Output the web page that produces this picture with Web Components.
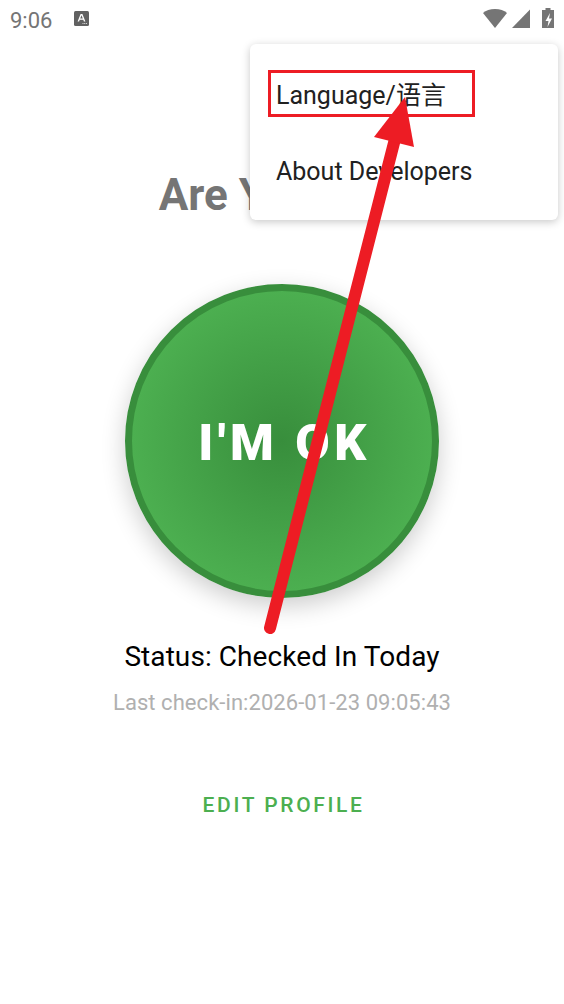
<!DOCTYPE html>
<html>
<head>
<meta charset="utf-8">
<style>
  html, body { margin: 0; padding: 0; background: #fff; }
  body { font-family: Roboto, "Noto Sans CJK SC", sans-serif; width: 564px; height: 1004px; overflow: hidden; position: relative; }
</style>
</head>
<body>
<status-bar time="9:06"></status-bar>
<check-screen>
  <h1 slot="title">Are You OK?</h1>
  <ok-button slot="action">I'M OK</ok-button>
  <span slot="status">Status: Checked In Today</span>
  <span slot="last">Last check-in:2026-01-23 09:05:43</span>
  <span slot="edit">EDIT PROFILE</span>
</check-screen>
<popup-menu>
  <menu-item>Language/语言</menu-item>
  <menu-item>About Developers</menu-item>
</popup-menu>
<annotation-overlay></annotation-overlay>

<script>
class StatusBar extends HTMLElement {
  connectedCallback() {
    this.attachShadow({ mode: 'open' });
    this.shadowRoot.innerHTML = `
      <style>
        :host { display: flex; align-items: center; height: 38px; padding: 2px 10px 0; box-sizing: border-box; color: #757575; font: 400 22px Roboto, sans-serif; }
        .time { width: 64px; }
        .a-icon { margin-top: -3px; }
        .right { margin-left: auto; display: flex; margin-top: -4px; }
        svg { display: block; }
      </style>
      <span class="time">${this.getAttribute('time')}</span>
      <svg class="a-icon" width="15" height="15" viewBox="0 0 15 15">
        <rect width="15" height="15" rx="1.5" fill="#616161"/>
        <path d="M3.6 10.4 6.6 3h1.8l3 7.4H9.9l-.6-1.6H5.7l-.6 1.6zM6.2 7.5h2.6L7.5 4.3z" fill="#fff"/>
        <path d="M8.5 12h1v1h-1zM10.2 12h1v1h-1zM11.9 12h1v1h-1z" fill="#ddd"/>
      </svg>
      <div class="right">
        <svg width="74" height="22" viewBox="0 0 74 22">
          <path d="M3 6C6 3.4 10 2 15 2s9 1.4 12 4L15 21z" fill="#757575"/>
          <path d="M32 21 50 2.5V21z" fill="#757575"/>
          <path d="M62 3h3.5V1h5v2H74v18H62z" fill="#757575"/>
          <path d="M70 6 65.5 14h3l-1 6 4.5-8.5h-3z" fill="#fff"/>
        </svg>
      </div>`;
  }
}

class CheckScreen extends HTMLElement {
  connectedCallback() {
    this.attachShadow({ mode: 'open' });
    this.shadowRoot.innerHTML = `
      <style>
        :host { display: flex; flex-direction: column; align-items: center; padding-top: 129px; font-family: Roboto, sans-serif; text-align: center; }
        ::slotted([slot=title]) { margin: 0; font: 700 44px/56px Roboto, sans-serif; color: #757575; }
        .action { margin-top: 61px; display: flex; }
        .status { margin-top: 41px; font-size: 28px; line-height: 36px; letter-spacing: .08px; color: #000; }
        .last { margin-top: 14px; font-size: 22px; line-height: 28px; letter-spacing: .06px; color: #b0b0b0; }
        .edit { margin-top: 74px; padding-left: 3px; font-size: 21px; line-height: 28px; font-weight: 500; letter-spacing: 2.6px; color: #4caf50; }
      </style>
      <slot name="title"></slot>
      <div class="action"><slot name="action"></slot></div>
      <div class="status"><slot name="status"></slot></div>
      <div class="last"><slot name="last"></slot></div>
      <div class="edit"><slot name="edit"></slot></div>`;
  }
}

class OkButton extends HTMLElement {
  connectedCallback() {
    this.attachShadow({ mode: 'open' });
    this.shadowRoot.innerHTML = `
      <style>
        :host { display: flex; align-items: center; justify-content: center; width: 314px; height: 314px; box-sizing: border-box; padding: 3px 0 0 5px; border-radius: 50%; border: 7px solid #388e3c;
          background: radial-gradient(circle closest-side, #388e3c 0%, #4caf50 100%);
          box-shadow: 0 8px 24px rgba(0,0,0,.2); color: #fff; font: 900 50px Roboto, sans-serif; letter-spacing: 4.5px; }
      </style>
      <slot></slot>`;
  }
}

class PopupMenu extends HTMLElement {
  connectedCallback() {
    this.attachShadow({ mode: 'open' });
    this.shadowRoot.innerHTML = `
      <style>
        :host { position: absolute; left: 250px; top: 44px; width: 308px; height: 176px; padding: 14px 0 12px; box-sizing: border-box; background: #fff; border-radius: 6px;
          box-shadow: 0 2px 8px rgba(0,0,0,.22); display: flex; flex-direction: column; }
      </style>
      <slot></slot>`;
  }
}

class MenuItem extends HTMLElement {
  connectedCallback() {
    this.attachShadow({ mode: 'open' });
    this.shadowRoot.innerHTML = `
      <style>
        :host { display: flex; align-items: center; flex: none; height: 76px; padding: 0 26px; color: #212121; font: 400 25px/30px Roboto, "Noto Sans CJK SC", sans-serif; }
      </style>
      <slot></slot>`;
  }
}

class AnnotationOverlay extends HTMLElement {
  connectedCallback() {
    this.attachShadow({ mode: 'open' });
    this.shadowRoot.innerHTML = `
      <style>
        :host { position: absolute; left: 0; top: 0; width: 564px; height: 1004px; pointer-events: none; }
        svg { display: block; }
      </style>
      <svg width="564" height="1004" viewBox="0 0 564 1004">
        <rect x="269.5" y="71.5" width="204" height="44" fill="none" stroke="#ed1c24" stroke-width="3"/>
        <path d="M270 628 396 135" fill="none" stroke="#ed1c24" stroke-width="12" stroke-linecap="round"/>
        <path d="M405 97 374 137 414 147z" fill="#ed1c24"/>
      </svg>`;
  }
}

customElements.define('status-bar', StatusBar);
customElements.define('check-screen', CheckScreen);
customElements.define('ok-button', OkButton);
customElements.define('popup-menu', PopupMenu);
customElements.define('menu-item', MenuItem);
customElements.define('annotation-overlay', AnnotationOverlay);
</script>
</body>
</html>
